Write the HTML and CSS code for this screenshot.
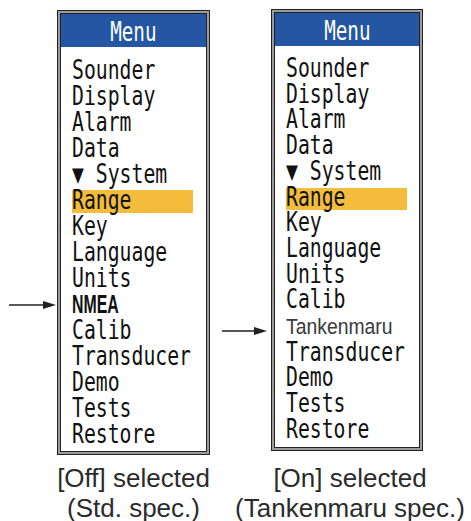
FILE: index.html
```html
<!DOCTYPE html>
<html>
<head>
<meta charset="utf-8">
<link rel="stylesheet" href="styles.css">
</head>
<body>
<div class="page">
  <div class="box">
    <div class="inner">
      <div class="head"><span class="ht">Menu</span></div>
      <ul class="list">
        <li><span class="t">Sounder</span></li>
        <li><span class="t">Display</span></li>
        <li><span class="t">Alarm</span></li>
        <li><span class="t">Data</span></li>
        <li><span class="t">▼ System</span></li>
        <li class="sel"><span class="t">Range</span></li>
        <li><span class="t">Key</span></li>
        <li><span class="t">Language</span></li>
        <li><span class="t">Units</span></li>
        <li class="mark"><svg class="arrow arrow-l" viewBox="0 0 47 10"><line x1="0" y1="5" x2="36" y2="5" stroke="#222" stroke-width="1.6"/><polygon points="34,1 47,5 34,9" fill="#222"/></svg><span class="nmea">NMEA</span></li>
        <li><span class="t">Calib</span></li>
        <li><span class="t">Transducer</span></li>
        <li><span class="t">Demo</span></li>
        <li><span class="t">Tests</span></li>
        <li><span class="t">Restore</span></li>
      </ul>
    </div>
  </div>
  <div class="box box-right">
    <div class="inner">
      <div class="head"><span class="ht">Menu</span></div>
      <ul class="list list-right">
        <li><span class="t">Sounder</span></li>
        <li><span class="t">Display</span></li>
        <li><span class="t">Alarm</span></li>
        <li><span class="t">Data</span></li>
        <li><span class="t">▼ System</span></li>
        <li class="sel"><span class="t">Range</span></li>
        <li><span class="t">Key</span></li>
        <li><span class="t">Language</span></li>
        <li><span class="t">Units</span></li>
        <li><span class="t">Calib</span></li>
        <li class="mark"><svg class="arrow arrow-r" viewBox="0 0 45 10"><line x1="0" y1="5" x2="34" y2="5" stroke="#222" stroke-width="1.6"/><polygon points="32,1 45,5 32,9" fill="#222"/></svg><span class="tk">Tankenmaru</span></li>
        <li><span class="t">Transducer</span></li>
        <li><span class="t">Demo</span></li>
        <li><span class="t">Tests</span></li>
        <li><span class="t">Restore</span></li>
      </ul>
    </div>
  </div>
  <div class="label">[Off] selected<br>(Std. spec.)</div>
  <div class="label label-right">[On] selected<br>(Tankenmaru spec.)</div>
</div>
</body>
</html>
```

FILE: styles.css
```css
html, body {
  margin: 0;
  padding: 0;
  background: #fff;
}

.page {
  display: grid;
  grid-template-columns: 153px 152px;
  column-gap: 61px;
  row-gap: 8px;
  padding: 10px 0 0 57px;
  align-items: start;
}

.box {
  border: 1px solid #222;
  padding: 2px;
  background: #9b9b9b;
}

.box-right {
  margin-top: -1px;
}

.inner {
  border: 1px solid #222;
  background: #fff;
}

.head {
  background: #2556a3;
  height: 33px;
  box-sizing: border-box;
  text-align: center;
  font-family: "DejaVu Sans Mono", monospace;
  font-size: 26px;
  line-height: 36px;
  color: #fff;
  overflow: hidden;
}

.ht {
  display: inline-block;
  transform: scaleX(0.74);
  transform-origin: 50% 50%;
}

.list {
  list-style: none;
  margin: 0;
  padding: 10px 0 4px 0;
  font-family: "DejaVu Sans Mono", monospace;
  font-size: 26px;
  line-height: 26px;
  color: #111;
}

.list-right {
  line-height: 25.7px;
}

.list li {
  position: relative;
  display: block;
  width: 121px;
  margin-left: 11px;
  white-space: nowrap;
}

.list li.sel {
  background: linear-gradient(to bottom, transparent 0 3px, #f4bc3b 3px);
}

.t {
  display: inline-block;
  transform: scaleX(0.76);
  transform-origin: 0 50%;
}

.nmea {
  display: inline-block;
  font-family: "Liberation Sans", Arial, sans-serif;
  font-weight: bold;
  font-size: 26px;
  transform: scaleX(0.61);
  transform-origin: 0 50%;
}

.tk {
  display: inline-block;
  font-family: "Liberation Sans", Arial, sans-serif;
  font-size: 22px;
  color: #3a3a3a;
  transform: scaleX(0.88);
  transform-origin: 0 50%;
}

.arrow {
  position: absolute;
  height: 10px;
}

.arrow-l {
  width: 47px;
  right: calc(100% + 16px);
  top: 9px;
}

.arrow-r {
  width: 45px;
  right: calc(100% + 19px);
  top: 13px;
}

.label {
  margin: 0 -50px;
  text-align: center;
  font-family: "Liberation Sans", Arial, sans-serif;
  font-size: 26px;
  line-height: 30px;
  color: #2b2b2b;
  white-space: nowrap;
}

.label-right {
  padding-left: 6px;
}
```
